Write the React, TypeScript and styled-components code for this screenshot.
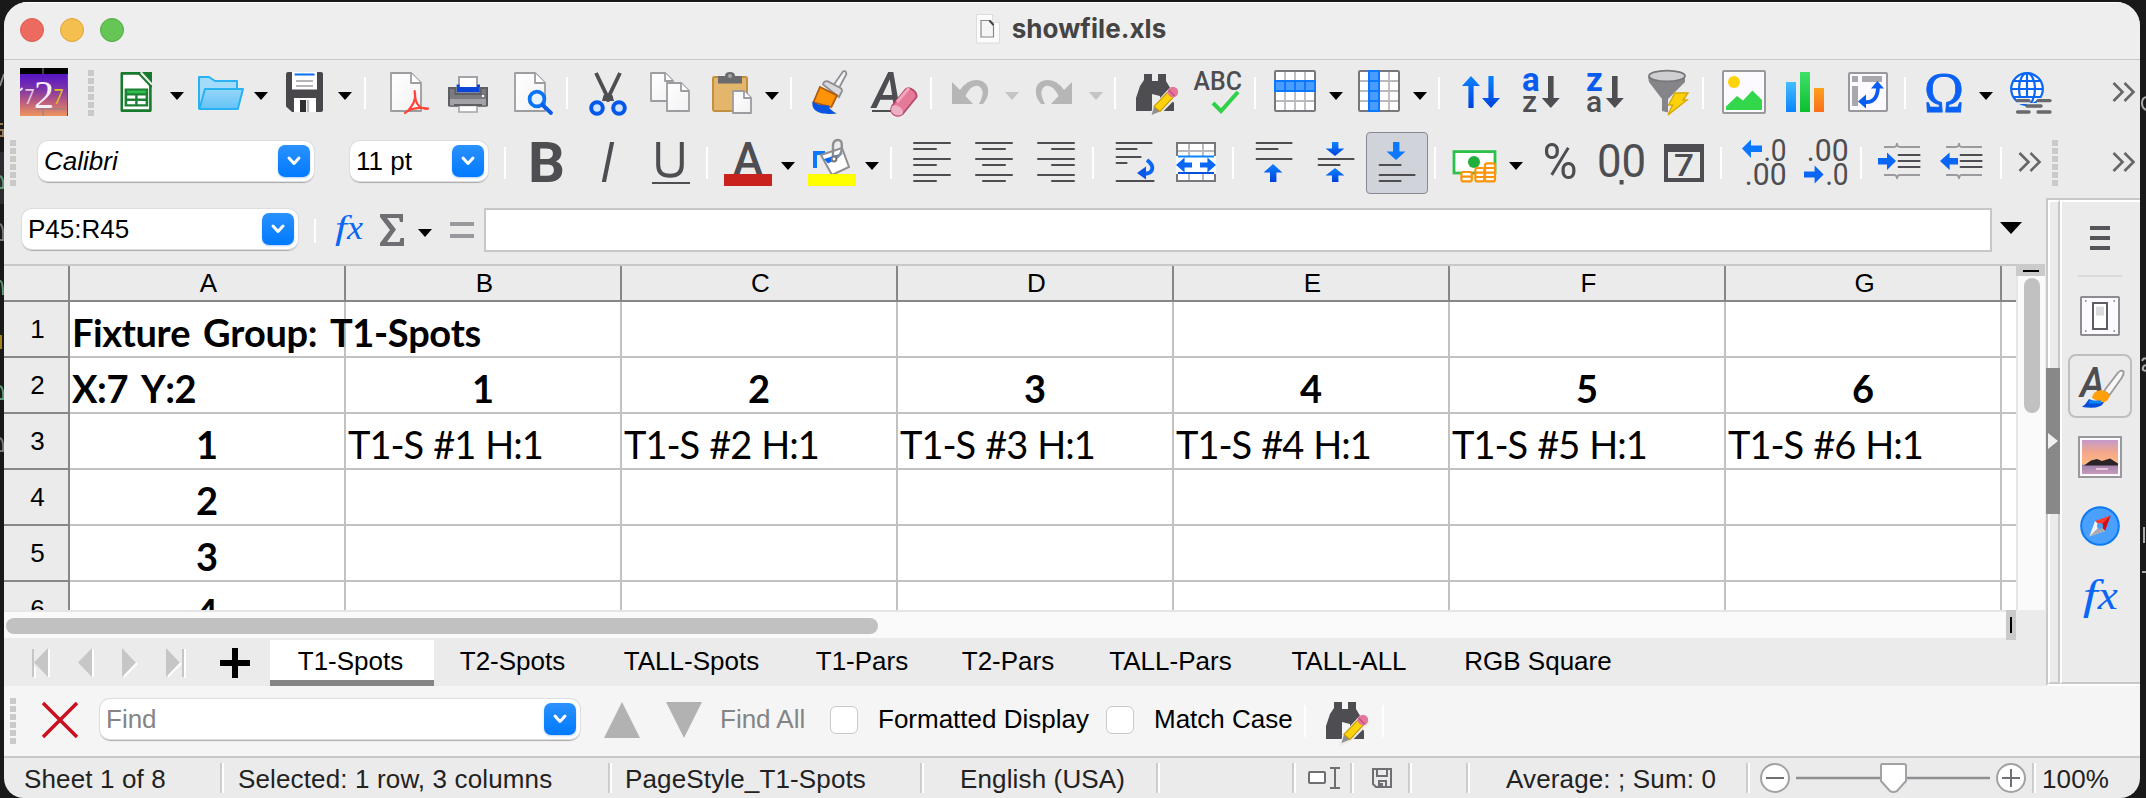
import React from 'react';
import styled, { createGlobalStyle } from 'styled-components';

const UI = '"Liberation Sans", Arial, sans-serif';
const GREY = '#4d4d52';
const LINE = '#c8c8c8';

const GlobalStyle = createGlobalStyle`
  * { box-sizing: border-box; }
  html, body { margin: 0; padding: 0; background: #191919; }
  body { width: 2146px; height: 798px; overflow: hidden; font-family: ${UI}; font-size: 26px; color: #000; }
  svg { display: block; flex: none; overflow: visible; }
`;

/* ---------- window frame ---------- */

const Desktop = styled.div`
  display: flex;
  width: 2146px;
  height: 798px;
  padding-top: 2px;
  background: #191919;
`;

const Window = styled.main`
  display: flex;
  flex-direction: column;
  width: 2136px;
  height: 796px;
  background: #ebebeb;
  border-radius: 24px 24px 20px 20px;
  overflow: hidden;
`;

const TitleBar = styled.header`
  display: grid;
  grid-template-columns: 1fr auto 1fr;
  align-items: center;
  height: 58px;
  flex: none;
  background: #eeeeee;
  border-top: 1px solid #fff;
  border-bottom: 1px solid ${LINE};
`;

const Lights = styled.div`
  display: flex;
  gap: 16px;
  padding: 0 0 2px 16px;
`;

const Light = styled.span<{ $fill: string; $edge: string }>`
  width: 24px;
  height: 24px;
  border-radius: 50%;
  background: ${(p) => p.$fill};
  border: 1px solid ${(p) => p.$edge};
`;

const Title = styled.h1`
  display: flex;
  align-items: center;
  gap: 11px;
  margin: 0;
  padding: 0 3px 5px 0;
  font: 700 26px Inter, sans-serif;
  letter-spacing: 0.05px;
  color: #444;
`;

/* ---------- toolbars ---------- */

const Toolbar = styled.div<{ $h: number; $left: number; $top: number }>`
  display: flex;
  align-items: flex-start;
  gap: 14px;
  flex: none;
  height: ${(p) => p.$h}px;
  padding: ${(p) => p.$top}px 4px 0 ${(p) => p.$left}px;
`;

const Separator = styled.span<{ $h?: number; $top?: number; $loose?: boolean }>`
  flex: none;
  width: 2px;
  height: ${(p) => p.$h ?? 32}px;
  margin: ${(p) => p.$top ?? 9}px ${(p) => (p.$loose ? 0 : 2)}px 0 ${(p) => (p.$loose ? 0 : -2)}px;
  background: #fff;
`;

const Grip = styled.span`
  flex: none;
  width: 6px;
  height: 46px;
  background: repeating-linear-gradient(#cacaca 0 6px, transparent 6px 8px);
`;

const ToolButton = styled.span<{ $active?: boolean }>`
  display: flex;
  flex: none;
  position: relative;
  ${(p) =>
    p.$active &&
    `
    margin: -6px -6px -6px -8px;
    padding: 5px 6px;
    height: 62px;
    background: #d0d4da;
    border: 1px solid #878a94;
    border-radius: 4px;
  `}
`;

const Arrow = styled.i<{ $muted?: boolean; $m?: string }>`
  flex: none;
  width: 0;
  height: 0;
  margin: ${(p) => p.$m ?? '24px -1px 0 9px'};
  border: 7px solid transparent;
  border-bottom: 0;
  border-top: 8px solid ${(p) => (p.$muted ? '#c4c4c4' : '#000')};
`;

const Spacer = styled.span`
  flex: 1;
`;

const Combo = styled.label<{ $w: number; $italic?: boolean; $muted?: boolean }>`
  display: flex;
  flex: none;
  align-items: center;
  justify-content: space-between;
  width: ${(p) => p.$w}px;
  height: 40px;
  padding: 0 4px 0 6px;
  background: #fff;
  border-radius: 10px;
  box-shadow: 0 0 0 1px #dedede, 0 1.5px 1px #aaa;
  font-style: ${(p) => (p.$italic ? 'italic' : 'normal')};
  color: ${(p) => (p.$muted ? '#858585' : '#000')};
  line-height: 40px;
`;

const ComboKnob = styled.span`
  display: grid;
  place-items: center;
  width: 32px;
  height: 32px;
  border-radius: 7px;
  background: linear-gradient(#2b91ff, #007aff);
  box-shadow: 0 1px 2px rgba(0, 90, 220, 0.3);
`;

/* ---------- body ---------- */

const Body = styled.div`
  display: flex;
  flex: none;
  height: 488px;
`;

const Main = styled.section`
  display: flex;
  flex-direction: column;
  width: 2042px;
`;

const FormulaBar = styled.div`
  display: flex;
  align-items: flex-start;
  height: 66px;
  flex: none;
  padding: 10px 0 0 18px;
`;

const FormulaInput = styled.div`
  width: 1508px;
  height: 44px;
  margin-left: 10px;
  background: #fff;
  border: 2px solid ${LINE};
`;

const SheetArea = styled.div`
  display: flex;
  height: 346px;
  flex: none;
`;

const Grid = styled.div`
  display: grid;
  grid-template-columns: 66px repeat(7, 276px) 14px;
  grid-template-rows: 36px repeat(6, 56px);
  width: 2012px;
  height: 346px;
  overflow: hidden;
  border-top: 2px solid ${LINE};
  background: #fff;
`;

const HeadCell = styled.div<{ $last?: boolean }>`
  display: grid;
  place-items: center;
  padding-left: 3px;
  background: #ebebeb;
  border-bottom: 2px solid #878787;
  border-right: ${(p) => (p.$last ? 0 : 2)}px solid #878787;
`;

const Cell = styled.div<{ $bold?: boolean; $center?: boolean; $last?: boolean }>`
  min-width: 0;
  padding: 7px 0 0 ${(p) => (p.$center ? 0 : 2)}px;
  border-bottom: 2px solid #c2c2c2;
  border-right: ${(p) => (p.$last ? 0 : 2)}px solid #c2c2c2;
  font: ${(p) => (p.$bold ? 700 : 400)} 38px/46px Lato, Carlito, sans-serif;
  letter-spacing: ${(p) => (p.$center ? 0 : p.$bold ? -0.4 : -1.05)}px;
  word-spacing: ${(p) => (p.$bold ? 4 : 1.5)}px;
  font-kerning: ${(p) => (p.$bold ? 'none' : 'auto')};
  text-align: ${(p) => (p.$center ? 'center' : 'left')};
  white-space: nowrap;
`;

const VScroll = styled.div`
  display: flex;
  flex-direction: column;
  align-items: center;
  width: 29px;
  border-left: 2px solid #e6e6e6;
  background: #fafafa;
`;

const SplitBox = styled.div<{ $vertical?: boolean }>`
  display: grid;
  place-items: center;
  flex: none;
  width: ${(p) => (p.$vertical ? 10 : 29)}px;
  height: ${(p) => (p.$vertical ? 30 : 12)}px;
  margin-left: ${(p) => (p.$vertical ? 0 : -2)}px;
  padding-top: ${(p) => (p.$vertical ? 0 : 2)}px;
  background: #cacaca;
  &::after {
    content: '';
    width: ${(p) => (p.$vertical ? 2 : 16)}px;
    height: ${(p) => (p.$vertical ? 16 : 2)}px;
    background: #000;
  }
`;

const Thumb = styled.div<{ $w: number; $h: number }>`
  width: ${(p) => p.$w}px;
  height: ${(p) => p.$h}px;
  margin: 2px;
  border-radius: 8px;
  background: #c1c1c1;
`;

const HScroll = styled.div`
  display: flex;
  height: 28px;
  flex: none;
`;

const HTrack = styled.div`
  width: 2002px;
  height: 28px;
  padding-top: 4px;
  border-top: 2px solid #e6e6e6;
  background: #fafafa;
`;

const TabBar = styled.nav`
  display: flex;
  height: 48px;
  flex: none;
  padding: 2px 0 0 28px;
`;

const TabNav = styled.span<{ $w: number }>`
  width: ${(p) => p.$w}px;
  padding-top: 8px;
`;

const Tab = styled.span<{ $active?: boolean; $w: number }>`
  width: ${(p) => p.$w}px;
  height: 46px;
  padding-right: ${(p) => (p.$active ? 3 : 1)}px;
  line-height: 42px;
  text-align: center;
  white-space: nowrap;
  background: ${(p) => (p.$active ? '#fff' : 'transparent')};
  border-bottom: 6px solid ${(p) => (p.$active ? '#858585' : 'transparent')};
`;

/* ---------- sidebar ---------- */

const Sidebar = styled.aside`
  display: flex;
  width: 94px;
  height: 488px;
  border-top: 2px solid ${LINE};
  border-left: 2px solid ${LINE};
  border-bottom: 2px solid #fff;
`;

const Splitter = styled.div`
  display: flex;
  align-items: flex-start;
  width: 12px;
  border: 2px solid #fff;
  border-bottom: 2px solid ${LINE};
  border-right-color: ${LINE};
`;

const SplitHandle = styled.div`
  display: grid;
  place-items: center;
  flex: none;
  width: 14px;
  height: 146px;
  margin: 166px 0 0 -4px;
  background: #888;
`;

const Deck = styled.div`
  display: flex;
  flex-direction: column;
  align-items: center;
  width: 80px;
  padding: 24px 2px 0 0;
  border-top: 2px solid #fff;
  border-left: 2px solid #fff;
  border-bottom: 2px solid ${LINE};
`;

const DeckRule = styled.hr`
  width: 44px;
  height: 2px;
  margin: 25px 0 7px;
  border: 0;
  background: #dadada;
`;

const DeckButton = styled.span<{ $active?: boolean }>`
  display: grid;
  place-items: center;
  flex: none;
  width: 64px;
  height: 64px;
  margin-bottom: 6px;
  border: 2px solid ${(p) => (p.$active ? '#bfbfbf' : 'transparent')};
  border-radius: 8px;
`;

/* ---------- find bar and status bar ---------- */

const FindBar = styled.div`
  display: flex;
  height: 70px;
  flex: none;
  align-items: flex-start;
  padding: 12px 0 0 6px;
  background: #f5f5f5;
`;

const FindLabel = styled.span<{ $muted?: boolean; $w: number; $ml: number }>`
  width: ${(p) => p.$w}px;
  margin-left: ${(p) => p.$ml}px;
  line-height: 42px;
  white-space: nowrap;
  color: ${(p) => (p.$muted ? '#858585' : '#000')};
`;

const CheckBox = styled.span<{ $ml: number }>`
  width: 28px;
  height: 28px;
  margin: 8px 0 0 ${(p) => p.$ml}px;
  border: 1px solid #c9c9c9;
  border-radius: 6px;
  background: #fff;
`;

const Push = styled.span<{ $ml: number; $top?: number }>`
  display: flex;
  margin: ${(p) => p.$top ?? 0}px 0 0 ${(p) => p.$ml}px;
`;

const StatusBar = styled.footer`
  display: flex;
  flex: 1;
  padding-top: 5px;
  border-top: 2px solid ${LINE};
`;

const StatusCell = styled.span<{ $w: number; $pad?: number }>`
  display: flex;
  align-items: center;
  justify-content: ${(p) => (p.$pad === undefined ? 'center' : 'flex-start')};
  flex: none;
  width: ${(p) => p.$w}px;
  height: 30px;
  padding-left: ${(p) => p.$pad ?? 0}px;
  letter-spacing: 0.14px;
  line-height: 32px;
  color: #222;
  white-space: nowrap;
  & + & {
    box-shadow: inset 2px 0 #cdcdcd, inset 4px 0 #fff;
  }
`;

const StatusText = styled.span`
  padding-top: 2px;
`;

/* ---------- drawings ---------- */

const Ico: React.FC<{ children: React.ReactNode; size?: number }> = ({ children, size = 48 }) => (
  <svg width={size} height={size} viewBox="0 0 24 24">
    {children}
  </svg>
);

const Defs = () => (
  <svg width="0" height="0" style={{ position: 'absolute' }}>
    <defs>
      <linearGradient id="blue" x1="0" y1="0" x2="0" y2="1">
        <stop offset="0" stopColor="#0a84ff" />
        <stop offset="1" stopColor="#0040dd" />
      </linearGradient>
      <linearGradient id="sky" x1="0" y1="0" x2="0" y2="1">
        <stop offset="0" stopColor="#96d5f8" />
        <stop offset="1" stopColor="#64c3f7" />
      </linearGradient>
      <linearGradient id="logo" x1="0" y1="0" x2="0" y2="1">
        <stop offset="0.05" stopColor="#5a17c4" />
        <stop offset="0.35" stopColor="#7c34a8" />
        <stop offset="0.65" stopColor="#b85a80" />
        <stop offset="1" stopColor="#ee9460" />
      </linearGradient>
      <linearGradient id="barBlue" x1="0" y1="0" x2="0" y2="1">
        <stop offset="0" stopColor="#45bdff" />
        <stop offset="1" stopColor="#0a84ff" />
      </linearGradient>
      <linearGradient id="barGreen" x1="0" y1="0" x2="0" y2="1">
        <stop offset="0" stopColor="#3fe06a" />
        <stop offset="1" stopColor="#0cbf2c" />
      </linearGradient>
      <linearGradient id="barOrange" x1="0" y1="0" x2="0" y2="1">
        <stop offset="0" stopColor="#ff9f1c" />
        <stop offset="1" stopColor="#f8701a" />
      </linearGradient>
      <linearGradient id="sunset" x1="0" y1="0" x2="0" y2="1">
        <stop offset="0" stopColor="#c49acb" />
        <stop offset="0.35" stopColor="#f2a68c" />
        <stop offset="0.7" stopColor="#ffb884" />
        <stop offset="0.75" stopColor="#a583ad" />
        <stop offset="1" stopColor="#c79bbd" />
      </linearGradient>
      <linearGradient id="paper" x1="0" y1="0" x2="1" y2="1">
        <stop offset="0" stopColor="#fff" />
        <stop offset="1" stopColor="#f2f2f4" />
      </linearGradient>
    </defs>
  </svg>
);

const PageShape: React.FC<{ x?: number; y?: number; w?: number; h?: number; f?: number; c?: string }> = ({
  x = 4.5, y = 2.5, w = 15, h = 19, f = 5, c = '#9c9ca1',
}) => (
  <g fill="url(#paper)" stroke={c} strokeWidth="0.9" strokeLinejoin="round">
    <path d={`M${x} ${y}h${w - f}l${f} ${f}v${h - f}h${-w}z`} />
    <path d={`M${x + w - f} ${y}v${f}h${f}`} fill="#fff" />
  </g>
);

const Logo = () => (
  <svg width="48" height="48" viewBox="0 0 48 48">
    <rect width="48" height="48" fill="#000" />
    <rect y="6" width="48" height="42" fill="url(#logo)" />
    <path d="M23 0v6M23 41v7M17 41h29" stroke="#8a7f88" strokeWidth="1" />
    <path d="M47.5 6v42" stroke="#7a4a2c" />
    <path d="M0 22.500l2.500-2.500" stroke="#f3e6f6" strokeWidth="2" />
    <text x="4.500" y="36" fontSize="21" fontFamily="Lato, sans-serif" fill="#e2cbe4" textLength="10" lengthAdjust="spacingAndGlyphs">7</text>
    <text x="14" y="39.500" fontSize="41" fontFamily="Liberation Serif, serif" fill="#f8eefa" textLength="20" lengthAdjust="spacingAndGlyphs">2</text>
    <text x="33.500" y="35.500" fontSize="21" fontFamily="Lato, sans-serif" fill="#dfc01e" textLength="10" lengthAdjust="spacingAndGlyphs">7</text>
  </svg>
);

const NewSheet = () => (
  <Ico>
    <path d="M5 3h10l4 5v13H5z" fill="#fff" />
    <path d="M14.200 2.700H4.900v18.600h14.300V8.500" fill="none" stroke="#18792c" strokeWidth="1.300" strokeLinejoin="round" />
    <path d="M13.200 2.500l6.600 7" stroke="#18792c" strokeWidth="1" />
    <path d="M15 2h5v5.500z" fill="#18792c" />
    <path d="M6.300 10.200h11.800v9.100H6.300z" fill="#1d8034" />
    <path d="M7.600 11.300h9.300v1.300H7.600z" fill="#2fc04e" />
    <path d="M7.600 13.700h4v1.600h-4zM12.800 13.700h4v1.600h-4zM7.600 16.500h4v1.600h-4zM12.800 16.500h4v1.600h-4z" fill="#fff" />
  </Ico>
);

const Folder = () => (
  <Ico>
    <path d="M1.500 20.500V4.500h5l3 2h11v4" fill="#a3dcfa" stroke="#28b1f3" strokeLinejoin="round" />
    <path d="M4.500 10.500h19l-2.600 10H1.700z" fill="url(#sky)" stroke="#28b1f3" strokeLinejoin="round" />
  </Ico>
);

const Floppy = () => (
  <Ico>
    <path d="M3 3.500Q3 2 4 2h16.500q1 0 1 1v18q0 1-1 1H6l-3-2.700z" fill="#48484c" />
    <path d="M6 2h12.500v8.800H6z" fill="#fff" />
    <path d="M7.300 2.800h10v1h-10z" fill="#0a6ff0" />
    <path d="M8 6.500h8.500M8 9h8.500" stroke="#b4b4b8" />
    <path d="M7 15h11v7H7z" fill="#fff" />
    <path d="M10 16h3v6h-3z" fill="#2d2d31" />
    <path d="M13.400 16h1.200v6h-1.200z" fill="#b9b9bd" />
  </Ico>
);

const Pdf = () => (
  <Ico>
    <PageShape />
    <path d="M11.500 22.500c2-1 4.700-5 5-7.500.2-1.500-.2-3.500-.2-3.500s.2 5.700 2.200 7.500 4.500 1.300 4.500 1.300-7-1.700-11.500 2.200z" fill="#fff" fillOpacity=".4" stroke="#ff453a" strokeWidth="1.100" strokeLinejoin="round" />
  </Ico>
);

const Printer = () => (
  <Ico>
    <path d="M7.500 4.500h9v6h-9z" fill="#fff" stroke="#a2a2a8" />
    <path d="M6.300 8.300h1.500v1.200h8.700V8.300h1.500v4H6.300z" fill="#0a44d8" />
    <path d="M3 9.500h3.300v2.800h11.400V9.500H21q1 0 1 1v8q0 1-1 1H3q-1 0-1-1v-8q0-1 1-1z" fill="#7a7a7f" />
    <path d="M2.500 10h3.200v3h12.600v-3h3.200v8.500h-19z" fill="none" stroke="#5e5e63" />
    <path d="M3 15.500h18v3.300H3z" fill="#a3a3a7" />
    <path d="M19 14h1" stroke="#fff" strokeWidth="1" />
    <path d="M7.500 18.700h9v3.300h-9z" fill="#fff" stroke="#a2a2a8" strokeWidth=".8" />
    <path d="M5 18.500h14" stroke="#5e5e63" />
  </Ico>
);

const Preview = () => (
  <Ico>
    <PageShape />
    <circle cx="15.500" cy="15.500" r="3.700" fill="#e6f4ff" stroke="#0a74f4" strokeWidth="1.900" />
    <path d="M18.300 18.500l4.200 4" stroke="#0a5ce8" strokeWidth="1.900" strokeLinecap="round" />
  </Ico>
);

const Scissors = () => (
  <Ico>
    <path d="M6 2.500l6.800 14.200M18 2.500l-6.800 14.200" stroke={GREY} strokeWidth="1.900" />
    <path d="M9.800 13.500h4.400l.8 3H9z" fill={GREY} />
    <g fill="#cfe4ff" stroke="#0558ea" strokeWidth="2">
      <circle cx="6.500" cy="20" r="2.900" />
      <circle cx="17.500" cy="20" r="2.900" />
    </g>
  </Ico>
);

const Copy = () => (
  <Ico>
    <PageShape x={2.500} y={2.500} w={11} h={14} f={4} />
    <PageShape x={10.500} y={7.500} w={11} h={14} f={4} />
  </Ico>
);

const Paste = () => (
  <Ico>
    <rect x="2.500" y="4.500" width="17" height="17" rx=".7" fill="#e3b66c" stroke="#c2913f" />
    <path d="M5 4h3.500q0-2 2.500-2t2.500 2H17v3.800H5z" fill="#6a6a6f" />
    <circle cx="11" cy="4" r="1" fill="#a5a5a8" />
    <PageShape x={12.500} y={11.500} w={9} h={11} f={3.500} />
  </Ico>
);

const Brush = () => (
  <Ico>
    <path d="M17.500 1.700q1.600-.5 1.700 1.300l-5 9.500-3-1.700z" fill="#f4f4f5" stroke="#8e8e93" strokeWidth=".9" />
    <path d="M7.500 8.200q.3-2 2.500-1.500l6 3.200q1.700 1 .5 2.600l-1 2z" fill="#d9d9db" stroke="#8e8e93" strokeWidth=".9" />
    <path d="M6 9.500l8.500 4.200-2.800 5.800-9-2.300z" fill="#ff9308" stroke="#b15a0c" strokeWidth=".9" />
    <path d="M2.300 16.800c2.500 2 6 2 8.200 2 0 2 2.300 3 3.800 4-4 .6-13.200.6-12-6z" fill="#0b55e0" />
  </Ico>
);

const ClearFormat = () => (
  <Ico>
    <text x="1.200" y="20" fontSize="25" textLength="15" lengthAdjust="spacingAndGlyphs" fontStyle="italic" fontFamily="Roboto, sans-serif" fontWeight="500" fill={GREY}>A</text>
    <path d="M1 21.500h10" stroke={GREY} strokeWidth="1" />
    <path d="M11 19l7-8.500q1.500-1 3.500.5 2 1.500 1.800 3.500l-7 8.500q-2 1.500-4 .5-2.500-1.500-1.300-4.500z" fill="#e47a98" stroke="#b9476c" strokeWidth=".9" />
    <path d="M11 19q2.500-1 4.500 1 1.500 1.500.8 3-2.500 1.500-4.500 0t-.8-4z" fill="#ecb0c2" />
    <path d="M13.500 17l6-7" stroke="#f2a7bd" strokeWidth="1.500" />
  </Ico>
);

const Undo = () => (
  <Ico>
    <path d="M2 7v11h10.500L8.700 14q3-6 6.500-5 4 2 .3 9h2q3.500-4 2.300-8.500-1.500-3.600-5.800-3.500-4.500 0-8 5z" fill="#b6b6b6" />
  </Ico>
);

const Redo = () => (
  <Ico>
    <path d="M20 7v11H9.500l3.800-4q-3-6-6.500-5-4 2-.3 9h-2Q1 14 2.200 9.500 3.700 5.900 8 6q4.500 0 8 5z" fill="#b6b6b6" />
  </Ico>
);

const Binoculars = () => (
  <Ico>
    <path d="M6 3h4v3.500h3V3h4v3.500l3 5 1 10h-7V14l-4-1v8.500H2V15l2-6 2-3z" fill={GREY} />
    <path d="M18.500 19l2.500-2v4.500h-4.500z" fill={GREY} />
    <path d="M9.800 24l1.500-5 8-8.500 3.500 2.800-8.500 8.700z" fill="#ececec" stroke="#ececec" strokeWidth="1.500" />
    <path d="M9.800 23.500l1.200-4.300 3 2.500z" fill="#8e8e93" />
    <path d="M11 19.200l7.300-7.500 2.700 2.500-7 7.500z" fill="#ffd30a" stroke="#c59a05" strokeWidth=".6" />
    <circle cx="20.500" cy="12" r="2.600" fill="#e4789a" />
    <path d="M18.300 11l3 3" stroke="#c94f78" strokeWidth=".7" />
  </Ico>
);

const Spelling = () => (
  <Ico>
    <text x="-.2" y="11" fontSize="12.500" textLength="24.200" lengthAdjust="spacingAndGlyphs" fontFamily="Roboto, sans-serif" fontWeight="500" fill={GREY}>ABC</text>
    <path d="M9.500 17.500l4 4L22 12" fill="none" stroke="#30d148" strokeWidth="2" />
  </Ico>
);

const TableIcon: React.FC<{ column?: boolean }> = ({ column }) => (
  <Ico>
    <rect x="1.500" y="1.500" width="20" height="20" rx=".6" fill="#fff" stroke="#77777c" strokeWidth="1" />
    <path d="M2 6.500h19M2 11.500h19M2 16.500h19M6.500 2v19M11.500 2v19M16.500 2v19" stroke="#b9b9bd" strokeWidth=".9" />
    {column ? (
      <>
        <path d="M6 1h6v21H6z" fill="#0a78ff" />
        <path d="M7 2h4v4H7zM7 7h4v4H7zM7 12h4v4H7zM7 17h4v4H7z" fill="#4a9cff" />
      </>
    ) : (
      <>
        <path d="M1 6h21v6H1z" fill="#0a78ff" />
        <path d="M2 7h4v4H2zM7 7h4v4H7zM12 7h4v4h-4zM17 7h4v4h-4z" fill="#4a9cff" />
      </>
    )}
  </Ico>
);

const Sort = () => (
  <Ico>
    <path d="M7.500 4l4.500 5H8.800v11H6.200V9H3z" fill="url(#blue)" />
    <path d="M17.500 20l4.500-5h-3.200V4h-2.600v11H13z" fill="url(#blue)" />
  </Ico>
);

const SortAZ: React.FC<{ top: string; bottom: string; x: number }> = ({ top, bottom, x }) => (
  <Ico>
    <text x={x} y="11.500" fontSize="16.500" fontWeight="700" fontFamily="Roboto, sans-serif" fill="#0a5cf0">{top}</text>
    <text x={x} y="21.800" fontSize="15" fontWeight="500" fontFamily="Roboto, sans-serif" fill={GREY}>{bottom}</text>
    <path d={`M${x + 13} 4h2.800v11h3.100l-4.500 5-4.500-5H${x + 13}z`} fill={GREY} />
  </Ico>
);

const Filter = () => (
  <Ico>
    <path d="M3 4.500l.5 2.500 6.500 8.500v6l3 .8v-6.800L21.500 7V4.500z" fill="#858589" />
    <ellipse cx="12.500" cy="4" rx="9" ry="2.700" fill="#cfcfd2" stroke="#77777b" strokeWidth=".9" />
    <path d="M16.500 12.500h6.500l-2.500 3.500h2L13 23.500l2.300-5h-2z" fill="#ffd10a" stroke="#d6a800" strokeWidth=".7" />
  </Ico>
);

const Picture = () => (
  <Ico>
    <rect x="1.500" y="1.500" width="21" height="21" rx=".5" fill="#fcfaff" stroke="#98989d" />
    <circle cx="7" cy="7" r="3" fill="#ffd30a" />
    <path d="M3 21v-1.800l5.500-5.200 3 2.200 4.700-5L21 16v5z" fill="#32d74b" />
  </Ico>
);

const Chart = () => (
  <Ico>
    <path d="M2 7h5v15H2z" fill="url(#barBlue)" />
    <path d="M9 2h5v20H9z" fill="url(#barGreen)" />
    <path d="M16 10h5v12h-5z" fill="url(#barOrange)" />
  </Ico>
);

const Pivot = () => (
  <Ico>
    <rect x="2.500" y="2.500" width="19" height="19" rx=".5" fill="#fcfaff" stroke="#98989d" />
    <path d="M4 4h3v3H4zM9 4h10v3H9zM4 9h3v10H4z" fill="#a8a8ac" />
    <path d="M10.500 17q6.500.5 6.500-8" fill="none" stroke="#0a5cf0" strokeWidth="1.900" />
    <path d="M16.700 6.500l3.300 3.800h-6.500zM7 16.800l4-3.500v7z" fill="#0a5cf0" />
  </Ico>
);

const Omega = () => (
  <Ico>
    <text x="1" y="21.800" fontSize="29" textLength="20" lengthAdjust="spacingAndGlyphs" fontFamily="Liberation Serif, serif" fill="#0a60f2" stroke="#0a60f2" strokeWidth=".4">Ω</text>
  </Ico>
);

const Hyperlink = () => (
  <Ico>
    <g fill="#fff" stroke="#0a66f4" strokeWidth="1.100">
      <circle cx="10.500" cy="10.500" r="7.900" />
      <ellipse cx="10.500" cy="10.500" rx="4" ry="7.900" fill="none" />
      <path d="M10.500 2.500v16M2.500 10.500h16M4 6.500h13M4 14.500h13" />
    </g>
    <path d="M5.500 16.500h6M15.500 16.500h7M10.500 19h7M5.500 22h6M15.500 22h7" stroke="#ebebeb" strokeWidth="3" />
    <path d="M5.800 16.300h5.700M16 16.300h6M10.500 19h7M5.800 22h5.700M16 22h6" stroke="#68686d" strokeWidth="1.700" strokeLinecap="round" />
  </Ico>
);

const Chevrons = () => (
  <svg width="24" height="20" viewBox="0 0 24 20" fill="none" stroke="#666" strokeWidth="2.600">
    <path d="M1.500 1l9 9-9 9M12.500 1l9 9-9 9" />
  </svg>
);

const Glyph: React.FC<{ t: string; x: number; y: number; size: number; weight?: number; italic?: boolean; len?: number; font?: string; fill?: string }> = ({
  t, x, y, size, weight = 400, italic, len, font = 'Roboto, sans-serif', fill = GREY,
}) => (
  <text x={x} y={y} fontSize={size} fontWeight={weight} fontStyle={italic ? 'italic' : 'normal'} fontFamily={font} fill={fill} textLength={len} lengthAdjust="spacingAndGlyphs">{t}</text>
);

const BoldIcon = () => <Ico><Glyph t="B" x={3} y={22} size={27.500} weight={700} len={18.500} /></Ico>;
const ItalicIcon = () => <Ico><path d="M13 2h2.100l-4.100 20H8.900z" fill={GREY} /></Ico>;
const UnderlineIcon = () => (
  <Ico>
    <path d="M6.100 2v11.500q0 5.400 5.900 5.400t5.900-5.400V2" fill="none" stroke={GREY} strokeWidth="2" />
    <path d="M3 22.500h19" stroke={GREY} strokeWidth="1" />
  </Ico>
);
const FontColor = () => (
  <Ico>
    <Glyph t="A" x={4.500} y={18.300} size={23} weight={500} len={15} />
    <path d="M0 18h24v6H0z" fill="#c9211e" />
  </Ico>
);
const FillColor = () => (
  <Ico>
    <path d="M3.500 15V7.500h5" fill="none" stroke="#0a78ff" strokeWidth="2" />
    <path d="M6.500 8.500L17 5l3.500 9.500-8.500 4z" fill="#fff" stroke="#8e8e93" />
    <path d="M8 10.500l9.500-3-2.500 2.500-5 2.800z" fill="#0a66f4" />
    <path d="M12.500 9V3.500q.3-2.500 2.400-2.500t2 2.500V5q0 4-3.500 5" fill="none" stroke="#8e8e93" strokeWidth="1.200" />
    <circle cx="13" cy="10.500" r="1.200" fill="#fff" stroke="#77777b" />
    <path d="M0 18h24v6H0z" fill="#ff0" />
  </Ico>
);

const AlignIcon: React.FC<{ mode: 'left' | 'center' | 'right' }> = ({ mode }) => {
  const x = mode === 'left' ? 3 : mode === 'center' ? 6.500 : 10;
  return (
    <Ico>
      <path d={`M3 2.500h18M${x} 5.500h11M3 10.500h18M${x} 13.500h11M3 18.500h18M${x} 21.500h11`} stroke={GREY} strokeWidth="1" strokeLinecap="round" />
    </Ico>
  );
};

const Wrap = () => (
  <Ico>
    <path d="M3.300 2.500h17.500M3.300 5.500h10M3.300 9.500h12M3.300 12.500h5M3.300 21.500h18.500" stroke={GREY} strokeLinecap="round" />
    <path d="M18.500 11q4.500 3.500 1.500 6.200-1 .7-3 .8" fill="none" stroke="#0a66f4" strokeWidth="1.900" />
    <path d="M13.500 17.500l4.500-3.300v6.600z" fill="#0a55ea" />
  </Ico>
);

const Merge = () => (
  <Ico>
    <path d="M2.500 2.500h19v19h-19z" fill="#fff" stroke="#77777c" />
    <path d="M3 6.500h18M8.500 3v6M15.500 3v6M8.500 17v4M15.500 17v4" stroke="#b9b9bd" />
    <path d="M2 9h20v9H2z" fill="#fff" />
    <path d="M3 9.300h18" stroke="#0a84ff" />
    <path d="M3 17.500h18" stroke="#0650e0" />
    <path d="M2 13.500l4.300-3.700v2.400h3.700v2.600H6.300v2.400zM22 13.500l-4.300-3.700v2.400H14v2.600h3.700v2.400z" fill="#0a66f4" />
  </Ico>
);

const VTop = () => (
  <Ico>
    <path d="M3.300 2.500h17.500M3.300 5.500h10.500M3.300 10.500h17.500" stroke={GREY} strokeLinecap="round" />
    <path d="M11.500 13l4.700 4.300h-3V22H10v-4.700H6.800z" fill="url(#blue)" />
  </Ico>
);
const VMiddle = () => (
  <Ico>
    <path d="M3.300 10.500h17.500M3.300 13.500h10.500" stroke={GREY} strokeLinecap="round" />
    <path d="M11.500 9l4.700-3.800h-3V2H10v3.200H6.800z" fill="url(#blue)" />
    <path d="M11.500 15l4.700 3.800h-3V22H10v-3.200H6.800z" fill="url(#blue)" />
  </Ico>
);
const VBottom = () => (
  <Ico>
    <path d="M3.300 13.500h10.500M3.300 18.500h17.500M3.300 21.500h10.500" stroke={GREY} strokeLinecap="round" />
    <path d="M11.500 11l4.700-4.300h-3V2H10v4.700H6.800z" fill="#0a78ff" />
  </Ico>
);

const Currency = () => (
  <Ico>
    <rect x="1" y="6.800" width="20.500" height="10.700" fill="#fff" stroke="#2cc24a" strokeWidth="1.400" />
    <circle cx="11" cy="12" r="3" fill="#22b03c" />
    <g fill="#fff" stroke="#ff9408" strokeWidth="1.100">
      <rect x="4.700" y="17" width="5.200" height="4.700" rx="1" />
      <rect x="11.700" y="15" width="4.500" height="6.700" rx="1" />
      <rect x="16.500" y="12.700" width="5" height="9" rx="1" />
      <path d="M5 19.300h4.500M12 17.300h4M12 19.500h4M17 15h4.300M17 17.300h4.300M17 19.500h4.300" />
    </g>
  </Ico>
);

const Percent = () => <Ico><Glyph t="%" x={3.300} y={20.600} size={25} len={17.500} /></Ico>;
const NumberFmt = () => (
  <Ico>
    <Glyph t="0" x={-0.500} y={19.500} size={23} len={12.300} />
    <Glyph t="0" x={11.800} y={19.500} size={23} len={12.300} />
    <path d="M10.800 21h2v2.200h-2z" fill={GREY} />
  </Ico>
);
const DateFmt = () => (
  <Ico>
    <path d="M3 4h18v17H3z" fill="none" stroke={GREY} strokeWidth="2" />
    <path d="M2 3h20v4H2z" fill={GREY} />
    <Glyph t="7" x={7} y={19} size={16} weight={500} len={10} />
  </Ico>
);

const Decimals: React.FC<{ remove?: boolean }> = ({ remove }) => (
  <Ico>
    {remove ? (
      <>
        <Glyph t=".00" x={3.400} y={11.500} size={16} len={20.900} />
        <Glyph t=".0" x={12.700} y={23.500} size={16} len={11.600} />
        <path d="M11.800 18.300l-4.500-4.500v3H2v3h5.300v3z" fill="#0a66f4" />
      </>
    ) : (
      <>
        <Glyph t=".0" x={12.700} y={11.500} size={16} len={11.600} />
        <Glyph t=".00" x={3.400} y={23.500} size={16} len={20.900} />
        <path d="M2 5.300L6.500.8v3H12V7H6.500v3z" fill="#0a78ff" />
      </>
    )}
  </Ico>
);

const Indent: React.FC<{ back?: boolean }> = ({ back }) => (
  <Ico>
    <path d="M3 4.500h5q1.500 0 1.500-2 0 2 1.500 2h10M3 18.500h5q1.500 0 1.500 2 0-2 1.500-2h10" fill="none" stroke="#9a9a9f" strokeWidth=".9" />
    <path d="M10.300 8.500h10.500M10.300 11.500h10.500M10.300 14.500h10.500" stroke={GREY} strokeLinecap="round" />
    <path d={back ? 'M0 11.500l4.800-4.300V10H9v3.200H4.800V16z' : 'M9 11.500L4.500 7.200V10H0v3.200h4.500V16z'} fill="#0a66f4" />
  </Ico>
);

const Fx: React.FC<{ w: number; h: number }> = ({ w, h }) => (
  <svg width={w} height={h} viewBox="0 0 32 32" preserveAspectRatio="none">
    <text x="3" y="25" fontSize="34" fontStyle="italic" fontFamily="Liberation Serif, serif" fill="#0a66f4" textLength="12" lengthAdjust="spacingAndGlyphs">f</text>
    <text x="15" y="25" fontSize="33" fontStyle="italic" fontFamily="Liberation Serif, serif" fill="#0a66f4" textLength="16" lengthAdjust="spacingAndGlyphs">x</text>
  </svg>
);

const Props = () => (
  <Ico>
    <rect x="2.500" y="2.500" width="19" height="19" rx=".4" fill="#fcfaff" stroke="#8b8b90" />
    <path d="M4.500 4.500h.8M18.700 4.500h.8M4.500 19.500h.8M18.700 19.500h.8" stroke="#9a9a9f" strokeWidth=".9" />
    <path d="M8.500 5.500h7v13h-7z" fill="#fff" stroke="#5d5d62" />
    <path d="M10 7.300h4v4.500h-4z" fill="#dcdcde" />
  </Ico>
);

const Styles = () => (
  <Ico>
    <Glyph t="A" x={2} y={17.500} size={21} weight={500} italic len={12.500} />
    <path d="M14 14.500L21 5.300q1.800-1.700 2.800-.5.300 1.500-1 3.200l-6 8.500z" fill="#f7f7f7" stroke="#9a9a9f" strokeWidth=".9" />
    <path d="M8 18q.5-3.500 4.500-4 3.500.8 4.500 3-1.500 3.500-4.500 3.500z" fill="#ff9f0a" />
    <path d="M3 22.500q2-1.500 3.500-4 3.500 2 7.500 1.500-1.500 4-11 2.500z" fill="#0550d8" />
    <path d="M6.500 20h6" stroke="#0a84ff" strokeWidth="1.500" />
  </Ico>
);

const Gallery = () => (
  <Ico>
    <path d="M1.500 2.500h21v20h-21z" fill="#fcfaff" stroke="#98989d" />
    <path d="M3 4h18v17H3z" fill="url(#sunset)" />
    <path d="M4 16.800l3.500-2.500 3-.8 2.500 1 4-1.200 4 2.500v1z" fill="#2a2426" />
    <path d="M10 18.500h6" stroke="#e8c8da" strokeWidth="1" />
  </Ico>
);

const Navigator = () => (
  <Ico>
    <circle cx="12" cy="12" r="9.400" fill="#4aa0ff" stroke="#0a7af5" />
    <path d="M17.300 6.700l-7.800 2.800 5 5z" fill="#ff3b30" />
    <path d="M17.300 6.700L12 12l2.500 2.500z" fill="#c9101c" />
    <path d="M6.700 17.300l2.800-7.800 5 5z" fill="#f4f4f6" />
    <path d="M6.700 17.300L12 12l2.500 2.500z" fill="#a9a9ae" />
    <circle cx="12" cy="12" r="1.500" fill="#4aa0ff" />
  </Ico>
);

const Triangle: React.FC<{ down?: boolean }> = ({ down }) => (
  <svg width="36" height="36" viewBox="0 0 36 36">
    <path d={down ? 'M0 0h36L18 36z' : 'M0 36h36L18 0z'} fill="#b2b2b2" />
  </svg>
);

const NavArrow: React.FC<{ flip?: boolean; bar?: boolean }> = ({ flip, bar }) => (
  <svg width="22" height="30" viewBox="0 0 22 30">
    {flip ? (
      <g>
        <path d="M2 2v28l14-14z" fill="#fff" />
        <path d="M0 0v29l14-14.500z" fill="#c6c6c6" />
        {bar && <><path d="M16 1h2v28h-2z" fill="#c6c6c6" /><path d="M18 1h2v29h-2z" fill="#fff" /></>}
      </g>
    ) : (
      <g>
        <path d="M18 1v28h-2V2z" fill="#fff" />
        <path d="M16 0v29L2 14.500z" fill="#c6c6c6" />
        {bar && <><path d="M0 1h2v28H0z" fill="#c6c6c6" /><path d="M2 18v12h2V20z" fill="#fff" /></>}
      </g>
    )}
  </svg>
);

const ZoomKnob: React.FC<{ plus?: boolean }> = ({ plus }) => (
  <svg width="30" height="30" viewBox="0 0 30 30">
    <circle cx="15" cy="15" r="14" fill="#fff" stroke="#a2a2a6" strokeWidth="2" />
    <path d={plus ? 'M6 15h18M15 6v18' : 'M6 15h18'} stroke="#707074" strokeWidth="2" />
  </svg>
);

const EdgeLeft = () => (
  <svg width="4" height="796" viewBox="0 0 4 796" fill="none" strokeWidth="2">
    <path d="M0 84l4-12" stroke="#888" />
    <path d="M0 122h3M0 134h3v-6H0" stroke="#9a7b55" />
    <path d="M0 150h4v52H0z" fill="#2c2c30" />
    <path d="M0 174q4 2 3 12H0" stroke="#5b9a72" />
    <path d="M0 222q4 2 3 16H0" stroke="#777" />
    <path d="M0 279q3 0 3 14" stroke="#5b9a72" />
    <path d="M1 333v14" stroke="#a08020" />
    <path d="M0 384q4 2 3 13H0" stroke="#5b9a72" />
    <path d="M0 436q4 2 3 13H0" stroke="#777" />
  </svg>
);

const EdgeRight = () => (
  <svg width="6" height="796" viewBox="0 0 6 796" fill="none" stroke="#aaa" strokeWidth="2">
    <path d="M6 95q-4 1-4 6t4 7M2 359q2-4 4-2M6 363q-4 1-3 5l3 1M4 525v16M2 570h4" />
  </svg>
);

/* ---------- composed parts ---------- */

const Chevron = () => (
  <svg width="14" height="10" viewBox="0 0 14 10" fill="none" stroke="#fff" strokeWidth="3" strokeLinecap="round" strokeLinejoin="round">
    <path d="M2 2l5 5.500L12 2" />
  </svg>
);

const ComboBox: React.FC<{ w: number; text: string; italic?: boolean; muted?: boolean }> = ({ w, text, italic, muted }) => (
  <Combo $w={w} $italic={italic} $muted={muted}>
    {text}
    <ComboKnob><Chevron /></ComboKnob>
  </Combo>
);

const Drop: React.FC<{ children: React.ReactNode; muted?: boolean; wide?: boolean }> = ({ children, muted, wide }) => (
  <ToolButton>
    {children}
    <Arrow $muted={muted} $m={wide ? '24px -2px 0 10px' : undefined} />
  </ToolButton>
);

const columns = ['A', 'B', 'C', 'D', 'E', 'F', 'G'];
const rows: string[][] = [
  ['Fixture Group: T1-Spots', '', '', '', '', '', ''],
  ['X:7 Y:2', '1', '2', '3', '4', '5', '6'],
  ['1', ...[1, 2, 3, 4, 5, 6].map((n) => `T1-S #${n} H:1`)],
  ['2', '', '', '', '', '', ''],
  ['3', '', '', '', '', '', ''],
  ['4', '', '', '', '', '', ''],
];

const tabs: [string, number][] = [
  ['T1-Spots', 164], ['T2-Spots', 158], ['TALL-Spots', 200], ['T1-Pars', 141],
  ['T2-Pars', 151], ['TALL-Pars', 174], ['TALL-ALL', 183], ['RGB Square', 195],
];

export default function App() {
  return (
    <>
      <GlobalStyle />
      <Defs />
      <Desktop>
        <EdgeLeft />
        <Window>
          <TitleBar>
            <Lights>
              <Light $fill="#ec6a5e" $edge="#d95e54" />
              <Light $fill="#f4bf4f" $edge="#dda63c" />
              <Light $fill="#65c656" $edge="#52aa42" />
            </Lights>
            <Title>
              <svg width="26" height="32" viewBox="0 0 26 32">
                <path d="M1.500 1.500h16l7 8v20.500h-23z" fill="#fcfcfc" stroke="#dcdcdc" />
                <path d="M17.500 1.500v8h7" fill="#eee" stroke="#ddd" />
                <path d="M6 7.500h8.500l4 4V24H6z" fill="#f5f5f5" stroke="#8a8a8a" strokeWidth="1.200" />
                <path d="M14.500 7.500l4 4.500" stroke="#444" strokeWidth="2" />
              </svg>
              showfile.xls
            </Title>
          </TitleBar>

          <Toolbar $h={66} $left={16} $top={8}>
            <Logo />
            <Push $ml={6} $top={2}><Grip /></Push>
            <Push $ml={4}><Drop wide><NewSheet /></Drop></Push>
            <Drop wide><Folder /></Drop>
            <Drop wide><Floppy /></Drop>
            <Separator $loose />
            <Push $ml={2}><Pdf /></Push>
            <Printer />
            <Preview />
            <Separator />
            <Scissors />
            <Copy />
            <Drop><Paste /></Drop>
            <Separator />
            <Brush />
            <ClearFormat />
            <Separator />
            <Drop muted><Undo /></Drop>
            <Drop muted><Redo /></Drop>
            <Separator />
            <Binoculars />
            <Spelling />
            <Separator />
            <Drop><TableIcon /></Drop>
            <Drop><TableIcon column /></Drop>
            <Separator />
            <Sort />
            <SortAZ top="a" bottom="z" x={2} />
            <SortAZ top="z" bottom="a" x={3} />
            <Filter />
            <Separator />
            <Picture />
            <Chart />
            <Pivot />
            <Separator />
            <Drop><Omega /></Drop>
            <Hyperlink />
            <Spacer />
            <Push $ml={0} $top={14}><Chevrons /></Push>
          </Toolbar>

          <Toolbar $h={72} $left={6} $top={12}>
            <Push $ml={0} $top={2}><Grip /></Push>
            <Push $ml={8} $top={3}><ComboBox w={276} text="Calibri" italic /></Push>
            <Push $ml={22} $top={3}><ComboBox w={138} text="11 pt" /></Push>
            <Push $ml={2}><Separator $loose /></Push>
            <Push $ml={2}><BoldIcon /></Push>
            <ItalicIcon />
            <UnderlineIcon />
            <Separator />
            <Drop><FontColor /></Drop>
            <Drop><FillColor /></Drop>
            <Separator />
            <AlignIcon mode="left" />
            <AlignIcon mode="center" />
            <AlignIcon mode="right" />
            <Separator />
            <Wrap />
            <Merge />
            <Separator />
            <VTop />
            <VMiddle />
            <ToolButton $active><VBottom /></ToolButton>
            <Separator />
            <Drop><Currency /></Drop>
            <Percent />
            <NumberFmt />
            <DateFmt />
            <Separator />
            <Decimals />
            <Decimals remove />
            <Separator />
            <Indent />
            <Indent back />
            <Separator />
            <Push $ml={0} $top={14}><Chevrons /></Push>
            <Push $ml={-4} $top={2}><Grip /></Push>
            <Spacer />
            <Push $ml={0} $top={14}><Chevrons /></Push>
          </Toolbar>

          <Body>
            <Main>
              <FormulaBar>
                <Push $ml={0} $top={1}><ComboBox w={276} text="P45:R45" /></Push>
                <Push $ml={16} $top={2}><Separator $h={24} $loose /></Push>
                <Push $ml={16} $top={6}><Fx w={32} h={32} /></Push>
                <Push $ml={16} $top={6}>
                  <svg width="24" height="32" viewBox="0 0 24 32">
                    <path d="M0 0h23v8h-3l-1-4H7l9 11.500L7 28h12.500l1-4H24v8H0v-3l10-13L0 3z" fill="#6e6e73" />
                  </svg>
                </Push>
                <Arrow $m="21px 0 0 14px" />
                <Push $ml={18} $top={14}>
                  <svg width="24" height="16" viewBox="0 0 24 16">
                    <path d="M0 0h24v4H0zM0 12h24v4H0z" fill="#98989d" />
                  </svg>
                </Push>
                <FormulaInput />
                <Push $ml={8} $top={14}>
                  <svg width="22" height="12" viewBox="0 0 22 12"><path d="M0 0h22L11 12z" /></svg>
                </Push>
              </FormulaBar>

              <SheetArea>
                <Grid>
                  <HeadCell />
                  {columns.map((c) => <HeadCell key={c}>{c}</HeadCell>)}
                  <HeadCell $last />
                  {rows.map((row, r) => (
                    <React.Fragment key={r}>
                      <HeadCell>{r + 1}</HeadCell>
                      {row.map((value, c) => (
                        <Cell key={c} $bold={c === 0 || r === 1} $center={(c === 0 && r > 1) || (c > 0 && r === 1)}>
                          {value}
                        </Cell>
                      ))}
                      <Cell $last />
                    </React.Fragment>
                  ))}
                </Grid>
                <VScroll>
                  <SplitBox />
                  <Thumb $w={16} $h={135} />
                </VScroll>
              </SheetArea>

              <HScroll>
                <HTrack><Thumb $w={872} $h={16} /></HTrack>
                <SplitBox $vertical />
              </HScroll>

              <TabBar>
                <TabNav $w={44}><NavArrow bar /></TabNav>
                <TabNav $w={46}><NavArrow /></TabNav>
                <TabNav $w={44}><NavArrow flip /></TabNav>
                <TabNav $w={54}><NavArrow flip bar /></TabNav>
                <TabNav $w={50}>
                  <svg width="30" height="30" viewBox="0 0 30 30"><path d="M12 0h6v12h12v6H18v12h-6V18H0v-6h12z" /></svg>
                </TabNav>
                {tabs.map(([name, w], i) => (
                  <Tab key={name} $active={i === 0} $w={w}>{name}</Tab>
                ))}
              </TabBar>
            </Main>

            <Sidebar>
              <Splitter>
                <SplitHandle>
                  <svg width="10" height="16" viewBox="0 0 10 16"><path d="M0 0v16l10-8z" fill="#f0f0f0" /></svg>
                </SplitHandle>
              </Splitter>
              <Deck>
                <svg width="20" height="24" viewBox="0 0 20 24"><path d="M0 0h20v4H0zM0 10h20v4H0zM0 20h20v4H0z" fill="#56565a" /></svg>
                <DeckRule />
                <DeckButton><Props /></DeckButton>
                <DeckButton $active><Styles /></DeckButton>
                <DeckButton><Gallery /></DeckButton>
                <DeckButton><Navigator /></DeckButton>
                <DeckButton><Push $ml={-2} $top={4}><Fx w={40} h={40} /></Push></DeckButton>
              </Deck>
            </Sidebar>
          </Body>

          <FindBar>
            <Grip />
            <Push $ml={26} $top={4}>
              <svg width="36" height="36" viewBox="0 0 36 36"><path d="M1 1l34 34M35 1L1 35" stroke="#c9101f" strokeWidth="3.500" /></svg>
            </Push>
            <Push $ml={22} $top={1}><ComboBox w={480} text="Find" muted /></Push>
            <Push $ml={24} $top={4}><Triangle /></Push>
            <Push $ml={26} $top={4}><Triangle down /></Push>
            <FindLabel $ml={18} $w={88} $muted>Find All</FindLabel>
            <CheckBox $ml={22} />
            <FindLabel $ml={20} $w={212}>Formatted Display</FindLabel>
            <CheckBox $ml={16} />
            <FindLabel $ml={20} $w={141}>Match Case</FindLabel>
            <Push $ml={9} $top={-2}><Separator $loose /></Push>
            <Push $ml={16} $top={-2}><Binoculars /></Push>
            <Push $ml={12} $top={-2}><Separator $loose /></Push>
          </FindBar>

          <StatusBar>
            <StatusCell $w={216} $pad={20}><StatusText>Sheet 1 of 8</StatusText></StatusCell>
            <StatusCell $w={388} $pad={18}><StatusText>Selected: 1 row, 3 columns</StatusText></StatusCell>
            <StatusCell $w={312} $pad={17}><StatusText>PageStyle_T1-Spots</StatusText></StatusCell>
            <StatusCell $w={236} $pad={40}><StatusText>English (USA)</StatusText></StatusCell>
            <StatusCell $w={136} />
            <StatusCell $w={58} $pad={16}>
              <svg width="32" height="22" viewBox="0 0 32 22" fill="none" stroke="#6e6e73" strokeWidth="2">
                <rect x="1" y="5" width="16" height="11" fill="#fff" rx="1" />
                <path d="M22 1h10M22 21h10M27 1v20" />
              </svg>
            </StatusCell>
            <StatusCell $w={58} $pad={22}>
              <svg width="20" height="20" viewBox="0 0 20 20" fill="none" stroke="#6e6e73" strokeWidth="2">
                <path d="M1 1h18v18H4l-3-3zM5 1v7h10V1M7 19v-6h7v6" />
                <path d="M8 15h3v4H8z" fill="#6e6e73" stroke="none" />
              </svg>
            </StatusCell>
            <StatusCell $w={58} />
            <StatusCell $w={280} $pad={40}><StatusText>Average: ; Sum: 0</StatusText></StatusCell>
            <StatusCell $w={286} $pad={14}>
              <ZoomKnob />
              <svg width="206" height="30" viewBox="0 0 206 30">
                <path d="M6 15h194" stroke="#8e8e93" strokeWidth="2.500" />
                <path d="M92 1h22q2 0 2 2v15l-9 10q-4 2-7 0l-9-10V3q0-2 1-2z" fill="#fff" stroke="#a2a2a6" strokeWidth="2" />
              </svg>
              <ZoomKnob plus />
            </StatusCell>
            <StatusCell $w={100} $pad={10}><StatusText>100%</StatusText></StatusCell>
          </StatusBar>
        </Window>
        <EdgeRight />
      </Desktop>
    </>
  );
}
